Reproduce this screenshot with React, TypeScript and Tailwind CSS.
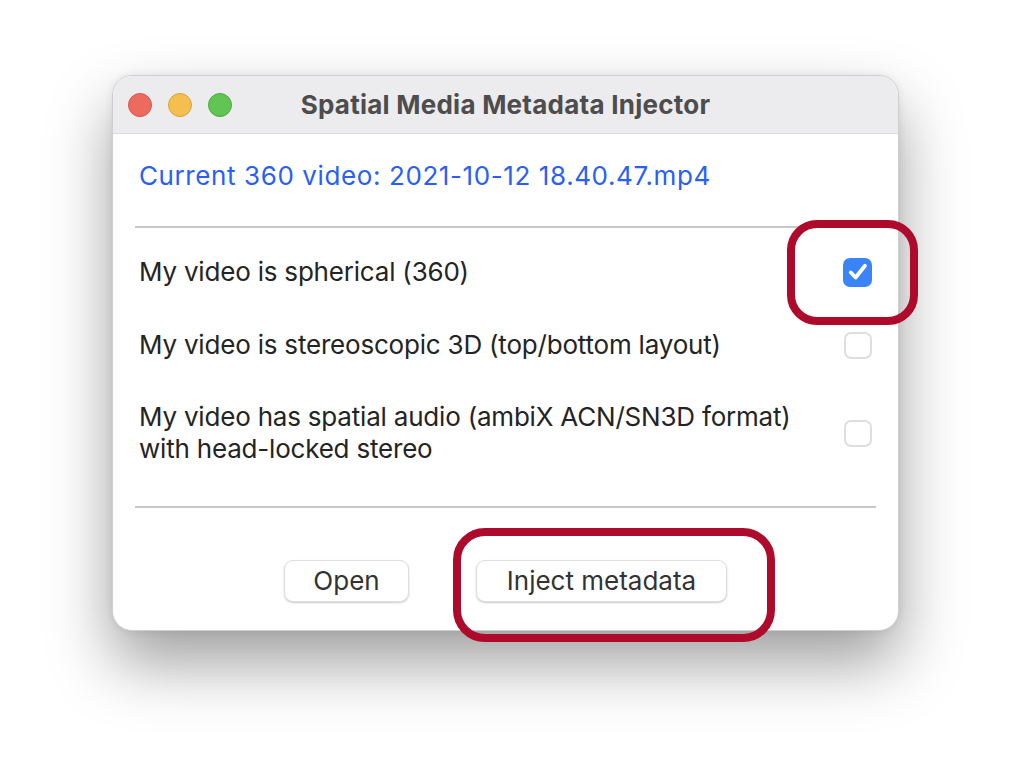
import React, { useState } from "react";

const font = { fontFamily: "Inter, 'Liberation Sans', sans-serif" };

const Checkbox: React.FC<{ checked: boolean; onChange: () => void }> = ({ checked, onChange }) => (
  <button
    onClick={onChange}
    className={
      checked
        ? "w-[29px] h-[29px] rounded-[7px] bg-[#3a84f7] flex items-center justify-center shrink-0"
        : "w-[28px] h-[27px] rounded-[7px] border-2 border-[#dedede] bg-white shrink-0"
    }
  >
    {checked && (
      <svg width="24" height="24" viewBox="0 0 20 20" fill="none">
        <path d="M4 10.4 L8 14.6 L15.8 4.8" stroke="white" strokeWidth="3.2" strokeLinecap="round" strokeLinejoin="round" />
      </svg>
    )}
  </button>
);

const App: React.FC = () => {
  const [spherical, setSpherical] = useState(true);
  const [stereo, setStereo] = useState(false);
  const [audio, setAudio] = useState(false);

  return (
    <div className="w-[1010px] h-[780px] bg-white pl-[112px] pt-[75px]" style={font}>
      <div className="relative w-[787px] h-[556px]">
        <div className="w-full h-full rounded-[20px] border border-[#cfcfcf] bg-white overflow-hidden shadow-[0_0_8px_rgba(0,0,0,0.08),0_32px_64px_rgba(0,0,0,0.38)]">
          {/* title bar */}
          <div className="relative h-[58px] bg-[#ecebee] border-b border-[#dcdbdd] flex items-center">
            <div className="absolute left-[15px] flex gap-[16px]">
              <span className="w-[24px] h-[24px] rounded-full bg-[#ed6a5e] border border-[#d5554a]" />
              <span className="w-[24px] h-[24px] rounded-full bg-[#f5bf4f] border border-[#d9a23c]" />
              <span className="w-[24px] h-[24px] rounded-full bg-[#61c554] border border-[#4ea843]" />
            </div>
            <div className="flex-1 text-center text-[26px] tracking-[0.25px] font-bold text-[#4d4d4d]">
              Spatial Media Metadata Injector
            </div>
          </div>

          {/* body */}
          <div className="px-[22px]">
            <div className="pt-[27px] pl-[4px] text-[26px] tracking-[0.6px] leading-[30px] text-[#2a5ff6]">
              Current 360 video: 2021-10-12 18.40.47.mp4
            </div>
            <div className="mt-[35px] h-[2px] bg-[#c8c8c8]" />

            <div className="pl-[4px] pr-[4px] text-[26px] tracking-[-0.2px] leading-[32px] text-[#242424]">
              <div className="mt-[28px] flex items-center justify-between">
                <span>My video is spherical (360)</span>
                <Checkbox checked={spherical} onChange={() => setSpherical(!spherical)} />
              </div>
              <div className="mt-[41px] flex items-center justify-between">
                <span>My video is stereoscopic 3D (top/bottom layout)</span>
                <Checkbox checked={stereo} onChange={() => setStereo(!stereo)} />
              </div>
              <div className="mt-[40px] flex items-center justify-between">
                <span>
                  My video has spatial audio (ambiX ACN/SN3D format)
                  <br />
                  with head-locked stereo
                </span>
                <Checkbox checked={audio} onChange={() => setAudio(!audio)} />
              </div>
            </div>

            <div className="mt-[41px] h-[2px] bg-[#c8c8c8]" />

            <div className="mt-[52px] flex justify-center gap-[67px]">
              <button className="w-[125px] h-[42px] rounded-[9px] bg-white border border-[#dedede] shadow-[0_1px_2px_rgba(0,0,0,0.2)] text-[26px] leading-none text-[#333333]">
                Open
              </button>
              <button className="w-[251px] h-[42px] rounded-[9px] bg-white border border-[#dedede] shadow-[0_1px_2px_rgba(0,0,0,0.2)] text-[26px] leading-none text-[#333333]">
                Inject metadata
              </button>
            </div>
          </div>
        </div>

        {/* annotation highlights */}
        <div className="absolute left-[675px] top-[145px] w-[131px] h-[105px] rounded-[30px] border-[8px] border-[#ae0a2c] pointer-events-none" />
        <div className="absolute left-[341px] top-[453px] w-[322px] h-[114px] rounded-[32px] border-[8px] border-[#ae0a2c] pointer-events-none" />
      </div>
    </div>
  );
};

export default App;
